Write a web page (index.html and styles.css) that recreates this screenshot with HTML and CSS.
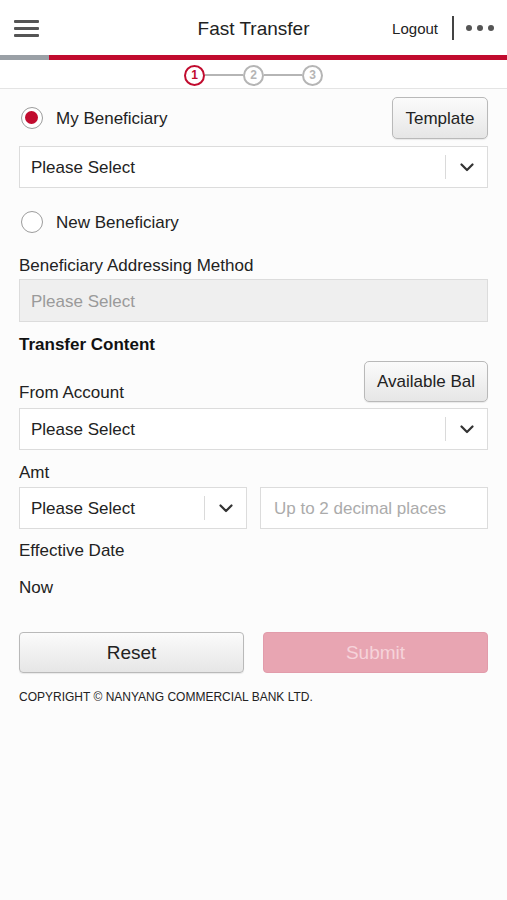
FILE: index.html
```html
<!DOCTYPE html>
<html lang="en">
<head>
<meta charset="utf-8">
<title>Fast Transfer</title>
<link rel="stylesheet" href="styles.css">
</head>
<body>
<header class="topbar">
  <div class="tb-left">
    <span class="hamburger"><i></i><i></i><i></i></span>
  </div>
  <div class="tb-title">Fast Transfer</div>
  <div class="tb-right">
    <span class="logout">Logout</span>
    <span class="vsep"></span>
    <span class="dots"><i></i><i></i><i></i></span>
  </div>
</header>
<div class="progress"><div class="progress-done"></div><div class="progress-rest"></div></div>
<div class="steps">
  <span class="step active">1</span>
  <span class="step-line"></span>
  <span class="step">2</span>
  <span class="step-line"></span>
  <span class="step">3</span>
</div>

<main class="content">
  <div class="row-radio first">
    <label class="radio-item"><span class="radio checked"></span><span>My Beneficiary</span></label>
    <button class="btn-light btn-template">Template</button>
  </div>
  <div class="select sel-1"><span class="sel-text">Please Select</span><span class="sel-div"></span><span class="chev"><svg width="14" height="9" viewBox="0 0 14 9"><path d="M1.5 1.5 L7 7 L12.5 1.5" fill="none" stroke="#333" stroke-width="2.2" stroke-linecap="round" stroke-linejoin="round"/></svg></span></div>

  <div class="row-radio second">
    <label class="radio-item"><span class="radio"></span><span>New Beneficiary</span></label>
  </div>
  <div class="label lbl-bam">Beneficiary Addressing Method</div>
  <div class="select disabled sel-bam"><span class="sel-text">Please Select</span></div>

  <div class="section-title">Transfer Content</div>
  <div class="row-from">
    <div class="label">From Account</div>
    <button class="btn-light btn-bal">Available Bal</button>
  </div>
  <div class="select sel-from"><span class="sel-text">Please Select</span><span class="sel-div"></span><span class="chev"><svg width="14" height="9" viewBox="0 0 14 9"><path d="M1.5 1.5 L7 7 L12.5 1.5" fill="none" stroke="#333" stroke-width="2.2" stroke-linecap="round" stroke-linejoin="round"/></svg></span></div>

  <div class="label lbl-amt">Amt</div>
  <div class="amt-row">
    <div class="select"><span class="sel-text">Please Select</span><span class="sel-div"></span><span class="chev"><svg width="14" height="9" viewBox="0 0 14 9"><path d="M1.5 1.5 L7 7 L12.5 1.5" fill="none" stroke="#333" stroke-width="2.2" stroke-linecap="round" stroke-linejoin="round"/></svg></span></div>
    <div class="input"><span class="placeholder">Up to 2 decimal places</span></div>
  </div>

  <div class="label lbl-eff">Effective Date</div>
  <div class="label lbl-now">Now</div>

  <div class="actions">
    <button class="btn-light btn-reset">Reset</button>
    <button class="btn-submit">Submit</button>
  </div>
  <div class="copyright">COPYRIGHT © NANYANG COMMERCIAL BANK LTD.</div>
</main>
</body>
</html>
```

FILE: styles.css
```css
* { box-sizing: border-box; }
html, body { margin: 0; padding: 0; }
body {
  background: #fcfcfc;
  font-family: "Liberation Sans", Arial, Helvetica, sans-serif;
  color: #222;
  width: 507px;
  min-height: 900px;
}

.topbar {
  height: 55px;
  background: #fff;
  display: grid;
  grid-template-columns: 1fr auto 1fr;
  align-items: center;
}
.tb-left { padding-left: 14px; display: flex; align-items: center; }
.hamburger { display: flex; flex-direction: column; gap: 4px; width: 25px; margin-top: 1px; }
.hamburger i { display: block; height: 3px; background: #555; border-radius: 1px; }
.tb-title { font-size: 19px; color: #222; padding-top: 2px; }
.tb-right { display: flex; justify-content: flex-end; align-items: center; padding-right: 13px; }
.logout { font-size: 15px; color: #222; padding-top: 2px; }
.vsep { width: 2px; height: 24px; background: #444; margin: 0 12px 0 14px; }
.dots { display: flex; gap: 5px; }
.dots i { display: block; width: 6px; height: 6px; border-radius: 50%; background: #555; }

.progress { display: flex; height: 5px; }
.progress-done { width: 49px; background: #9aa0a6; }
.progress-rest { flex: 1; background: #c10b2e; }

.steps {
  height: 29px;
  display: flex;
  justify-content: center;
  align-items: center;
  padding-top: 2px;
  border-bottom: 1px solid #e4e4e4;
  background: #fff;
}
.step {
  width: 21px; height: 21px;
  border: 2px solid #b5b5b5;
  border-radius: 50%;
  display: flex; align-items: center; justify-content: center;
  font-size: 12px; font-weight: bold;
  color: #b5b5b5;
  background: #fff;
}
.step.active { border-color: #c10b2e; color: #c10b2e; border-width: 2.5px; }
.step-line { width: 38px; height: 2px; background: #b5b5b5; }

.content { padding: 0 19px; }

.row-radio { display: flex; justify-content: space-between; align-items: center; }
.row-radio.first { margin-top: 8px; height: 42px; }
.row-radio.second { margin-top: 12px; height: 44px; }
.radio-item { display: flex; align-items: center; gap: 13px; font-size: 17px; color: #222; padding-left: 2px; }
.radio-item span:last-child { padding-top: 2px; }
.radio {
  width: 22px; height: 22px; border-radius: 50%;
  border: 1.5px solid #9c9c9c;
  background: #fff;
  display: inline-block;
  position: relative;
}
.radio.checked::after {
  content: "";
  position: absolute;
  left: 3px; top: 3px;
  width: 13px; height: 13px;
  border-radius: 50%;
  background: #c10b2e;
}

.btn-light {
  font-family: inherit;
  font-size: 17px;
  color: #222;
  background: linear-gradient(#fbfbfb, #e6e6e6);
  border: 1px solid #b9b9b9;
  border-radius: 5px;
  padding: 1px 0 0;
  box-shadow: 0 1px 1px rgba(0,0,0,0.08);
}
.btn-template { width: 96px; height: 42px; }
.btn-bal { width: 124px; height: 41px; }

.select {
  height: 42px;
  border: 1px solid #dcdcdc;
  background: #fff;
  display: flex;
  align-items: center;
  font-size: 17px;
  color: #222;
}
.sel-text { flex: 1; padding-left: 11px; padding-top: 2px; }
.sel-div { width: 1px; height: 24px; background: #dadada; }
.chev { width: 41px; display: flex; justify-content: center; align-items: center; padding-top: 1px; }
.sel-1 { margin-top: 7px; }
.select.disabled { background: #efefef; color: #9a9a9a; height: 43px; margin-top: 4px; }

.label { font-size: 17px; color: #222; line-height: 20px; height: 20px; padding-top: 1px; }
.lbl-bam { margin-top: 11px; }
.section-title { font-size: 17px; font-weight: bold; color: #111; line-height: 20px; height: 20px; margin-top: 12px; padding-top: 1px; }
.row-from { display: flex; justify-content: space-between; align-items: flex-end; margin-top: 7px; }
.sel-from { margin-top: 6px; }
.lbl-amt { margin-top: 12px; }
.amt-row { display: grid; grid-template-columns: 1fr 1fr; gap: 13px; margin-top: 5px; }
.input {
  height: 42px; border: 1px solid #dcdcdc; background: #fff;
  display: flex; align-items: center; padding-left: 13px; padding-top: 2px;
  font-size: 17px;
}
.placeholder { color: #ababab; }
.lbl-eff { margin-top: 11px; }
.lbl-now { margin-top: 17px; }

.actions { display: grid; grid-template-columns: 1fr 1fr; gap: 19px; margin-top: 35px; }
.btn-reset { height: 41px; font-size: 19px; border-radius: 4px; }
.btn-submit {
  height: 41px; font-family: inherit; font-size: 19px;
  background: #e8a5b2; color: #f6d3da;
  border: 1px solid #e29cab; border-radius: 4px; padding: 1px 0 0;
}
.copyright { font-size: 12px; line-height: 14px; margin-top: 17px; color: #222; }
```
